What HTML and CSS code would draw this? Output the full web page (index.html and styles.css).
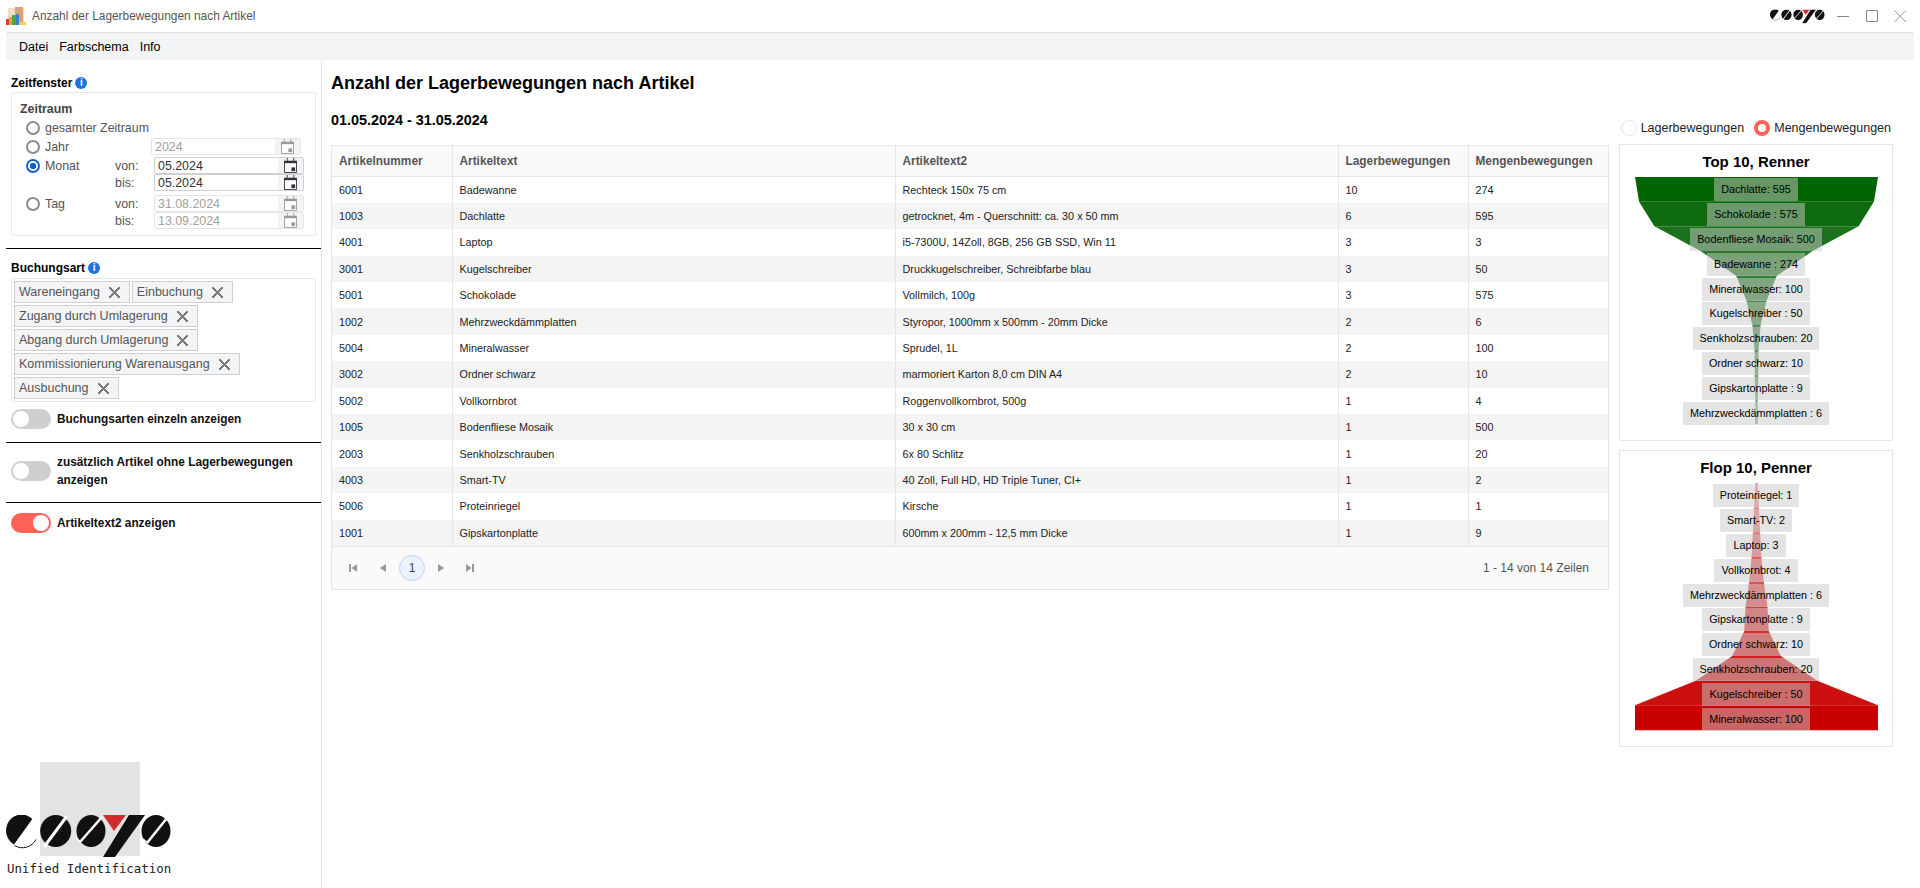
FILE: index.html
```html
<!DOCTYPE html>
<html lang="de">

<head>
    <meta charset="UTF-8">
    <title>Anzahl der Lagerbewegungen nach Artikel</title>
    <link rel="stylesheet" href="styles.css">
</head>

<body>
    <!-- Titelleiste -->
    <header class="titlebar">
        <svg class="app-icon" viewBox="0 0 20 20">
            <rect x="2" y="2" width="16" height="16" fill="#f1dccb"/>
            <rect x="9" y="1" width="8" height="16" fill="#d9a07a"/>
            <rect x="0" y="13" width="3" height="6" fill="#d8402f"/>
            <rect x="3" y="11" width="3" height="8" fill="#eba62a"/>
            <rect x="6" y="9" width="4" height="10" fill="#46a84f"/>
            <rect x="10" y="8" width="3" height="11" fill="#2f86d8"/>
            <rect x="13" y="16" width="7" height="3" fill="#f3d04e"/>
        </svg>
        <span class="titlebar-text">Anzahl der Lagerbewegungen nach Artikel</span>
        <svg class="titlebar-logo" viewBox="0 0 166 43">
            <use href="#cosys-logo"/>
        </svg>
        <div class="window-buttons">
            <svg viewBox="0 0 13 13"><path d="M0 6.500h12" stroke="#888" fill="none"/></svg>
            <svg viewBox="0 0 13 13"><path d="M.5.500h11v11H.5z" stroke="#888" fill="none"/></svg>
            <svg viewBox="0 0 13 13"><path d="M.5.500l11.500 11.500M12 .5L.5 12" stroke="#999" fill="none"/></svg>
        </div>
    </header>

    <nav class="menubar">
        <span>Datei</span>
        <span>Farbschema</span>
        <span>Info</span>
    </nav>

    <div class="content">
        <!-- linke Spalte -->
        <aside class="sidebar">
            <section class="side-block block-time">
                <h3 class="side-title">Zeitfenster <span class="info">i</span></h3>
                <div class="box timebox">
                    <div class="box-title">Zeitraum</div>
                    <div class="time-row">
                        <span class="radio"></span><span class="time-label">gesamter Zeitraum</span>
                    </div>
                    <div class="time-row">
                        <span class="radio"></span><span class="time-label">Jahr</span>
                        <span class="date-input disabled wide"><span>2024</span><span class="cal-btn"><svg class="cal" viewBox="0 0 14 16"><use href="#cal-icon"/></svg></span></span>
                    </div>
                    <div class="time-row row-tight row-month">
                        <span class="radio on"></span><span class="time-label">Monat</span>
                        <span class="von">von:</span>
                        <span class="date-input"><span>05.2024</span><span class="cal-btn"><svg class="cal active" viewBox="0 0 14 16"><use href="#cal-icon"/></svg></span></span>
                    </div>
                    <div class="time-row row-tight">
                        <span class="radio blank"></span><span class="time-label"></span>
                        <span class="von">bis:</span>
                        <span class="date-input"><span>05.2024</span><span class="cal-btn"><svg class="cal active" viewBox="0 0 14 16"><use href="#cal-icon"/></svg></span></span>
                    </div>
                    <div class="time-row row-tight row-day">
                        <span class="radio"></span><span class="time-label">Tag</span>
                        <span class="von">von:</span>
                        <span class="date-input disabled"><span>31.08.2024</span><span class="cal-btn"><svg class="cal" viewBox="0 0 14 16"><use href="#cal-icon"/></svg></span></span>
                    </div>
                    <div class="time-row row-tight">
                        <span class="radio blank"></span><span class="time-label"></span>
                        <span class="von">bis:</span>
                        <span class="date-input disabled"><span>13.09.2024</span><span class="cal-btn"><svg class="cal" viewBox="0 0 14 16"><use href="#cal-icon"/></svg></span></span>
                    </div>
                </div>
            </section>

            <section class="side-block block-booking">
                <h3 class="side-title">Buchungsart <span class="info">i</span></h3>
                <div class="box chips">
                    <span class="chip">Wareneingang <i class="chip-x"></i></span>
                    <span class="chip">Einbuchung <i class="chip-x"></i></span>
                    <span class="chip">Zugang durch Umlagerung <i class="chip-x"></i></span>
                    <span class="chip">Abgang durch Umlagerung <i class="chip-x"></i></span>
                    <span class="chip">Kommissionierung Warenausgang <i class="chip-x"></i></span>
                    <span class="chip">Ausbuchung <i class="chip-x"></i></span>
                </div>
                <div class="switch-row">
                    <span class="switch"></span>
                    <span class="switch-label">Buchungsarten einzeln anzeigen</span>
                </div>
            </section>

            <section class="side-block block-extra">
                <div class="switch-row">
                    <span class="switch"></span>
                    <span class="switch-label">zusätzlich Artikel ohne Lagerbewegungen anzeigen</span>
                </div>
            </section>

            <section class="block-text2">
                <div class="switch-row">
                    <span class="switch on"></span>
                    <span class="switch-label">Artikeltext2 anzeigen</span>
                </div>
            </section>

            <div class="side-logo">
                <div class="logo-square"></div>
                <svg class="logo-big" viewBox="0 0 166 43">
                    <use href="#cosys-logo"/>
                </svg>
                <div class="logo-text">Unified Identification</div>
            </div>
        </aside>

        <!-- Hauptbereich -->
        <main class="main">
            <h1 class="page-title">Anzahl der Lagerbewegungen nach Artikel</h1>
            <div class="date-line">
                <h2 class="date-range">01.05.2024 - 31.05.2024</h2>
                <div class="mode-radios">
                    <span class="mode-radio"></span><span>Lagerbewegungen</span>
                    <span class="mode-radio on"></span><span>Mengenbewegungen</span>
                </div>
            </div>

            <div class="work">
                <div class="grid">
                    <table class="grid-table">
                        <colgroup>
                            <col class="c1"><col class="c2"><col class="c3"><col class="c4"><col class="c5">
                        </colgroup>
                        <thead>
                            <tr><th>Artikelnummer</th><th>Artikeltext</th><th>Artikeltext2</th><th>Lagerbewegungen</th><th>Mengenbewegungen</th></tr>
                        </thead>
                        <tbody>
                            <tr><td>6001</td><td>Badewanne</td><td>Rechteck 150x 75 cm</td><td>10</td><td>274</td></tr>
                            <tr><td>1003</td><td>Dachlatte</td><td>getrocknet, 4m - Querschnitt: ca. 30 x 50 mm</td><td>6</td><td>595</td></tr>
                            <tr><td>4001</td><td>Laptop</td><td>i5-7300U, 14Zoll, 8GB, 256 GB SSD, Win 11</td><td>3</td><td>3</td></tr>
                            <tr><td>3001</td><td>Kugelschreiber</td><td>Druckkugelschreiber, Schreibfarbe blau</td><td>3</td><td>50</td></tr>
                            <tr><td>5001</td><td>Schokolade</td><td>Vollmilch, 100g</td><td>3</td><td>575</td></tr>
                            <tr><td>1002</td><td>Mehrzweckdämmplatten</td><td>Styropor, 1000mm x 500mm - 20mm Dicke</td><td>2</td><td>6</td></tr>
                            <tr><td>5004</td><td>Mineralwasser</td><td>Sprudel, 1L</td><td>2</td><td>100</td></tr>
                            <tr><td>3002</td><td>Ordner schwarz</td><td>marmoriert Karton 8,0 cm DIN A4</td><td>2</td><td>10</td></tr>
                            <tr><td>5002</td><td>Vollkornbrot</td><td>Roggenvollkornbrot, 500g</td><td>1</td><td>4</td></tr>
                            <tr><td>1005</td><td>Bodenfliese Mosaik</td><td>30 x 30 cm</td><td>1</td><td>500</td></tr>
                            <tr><td>2003</td><td>Senkholzschrauben</td><td>6x 80 Schlitz</td><td>1</td><td>20</td></tr>
                            <tr><td>4003</td><td>Smart-TV</td><td>40 Zoll, Full HD, HD Triple Tuner, CI+</td><td>1</td><td>2</td></tr>
                            <tr><td>5006</td><td>Proteinriegel</td><td>Kirsche</td><td>1</td><td>1</td></tr>
                            <tr><td>1001</td><td>Gipskartonplatte</td><td>600mm x 200mm - 12,5 mm Dicke</td><td>1</td><td>9</td></tr>
                        </tbody>
                    </table>
                    <div class="pager">
                        <svg class="pg-icon first" viewBox="0 0 10 10"><path d="M1 1h2v8H1zM9 1v8L3.500 5z"/></svg>
                        <svg class="pg-icon prev" viewBox="0 0 10 10"><path d="M8 1v8L2 5z"/></svg>
                        <span class="pg-num">1</span>
                        <svg class="pg-icon next" viewBox="0 0 10 10"><path d="M2 1v8l6-4z"/></svg>
                        <svg class="pg-icon last" viewBox="0 0 10 10"><path d="M9 1H7v8h2zM1 1v8l5.500-4z"/></svg>
                        <span class="pg-info">1 - 14 von 14 Zeilen</span>
                    </div>
                </div>

                <div class="charts">
                    <div class="chart-card">
                        <div class="chart-title">Top 10, Renner</div>
                        <div class="funnel">
                            <svg class="funnel-bg" viewBox="0 0 243 248">
                                <polygon fill="#006400" points="0,0 243,0 238.900,24.700 4.100,24.700"/>
                                <polygon fill="#0e6b0e" points="4.100,24.700 238.900,24.700 223.600,49.300 19.400,49.300"/>
                                <polygon fill="#1c721c" points="19.400,49.300 223.600,49.300 177.500,74 65.500,74"/>
                                <polygon fill="#2a792a" points="65.500,74 177.500,74 141.900,98.700 101.100,98.700"/>
                                <polygon fill="#388038" points="101.100,98.700 141.900,98.700 131.700,123.300 111.300,123.300"/>
                                <polygon fill="#468746" points="111.300,123.300 131.700,123.300 125.600,148 117.400,148"/>
                                <polygon fill="#548e54" points="117.400,148 125.600,148 123.500,173 119.500,173"/>
                                <polygon fill="#629562" points="119.500,173 123.500,173 123.300,197.700 119.700,197.700"/>
                                <polygon fill="#709c70" points="119.700,197.700 123.300,197.700 122.700,222.300 120.300,222.300"/>
                                <polygon fill="#7ea37e" points="120.300,222.300 122.700,222.300 122.700,247.300 120.300,247.300"/>
                            </svg>
                            <span class="f-label">Dachlatte: 595</span>
                            <span class="f-label">Schokolade : 575</span>
                            <span class="f-label">Bodenfliese Mosaik: 500</span>
                            <span class="f-label">Badewanne : 274</span>
                            <span class="f-label">Mineralwasser: 100</span>
                            <span class="f-label">Kugelschreiber : 50</span>
                            <span class="f-label">Senkholzschrauben: 20</span>
                            <span class="f-label">Ordner schwarz: 10</span>
                            <span class="f-label">Gipskartonplatte : 9</span>
                            <span class="f-label">Mehrzweckdämmplatten : 6</span>
                        </div>
                    </div>
                    <div class="chart-card">
                        <div class="chart-title">Flop 10, Penner</div>
                        <div class="funnel">
                            <svg class="funnel-bg" viewBox="0 0 243 248">
                                <polygon fill="#ec9090" points="120.300,0 122.700,0 123.900,24.700 119.100,24.700"/>
                                <polygon fill="#e88080" points="119.100,24.700 123.900,24.700 125.100,49.300 117.900,49.300"/>
                                <polygon fill="#e47070" points="117.900,49.300 125.100,49.300 126.400,74 116.600,74"/>
                                <polygon fill="#e06060" points="116.600,74 126.400,74 128.800,98.700 114.200,98.700"/>
                                <polygon fill="#dc5050" points="114.200,98.700 128.800,98.700 132.400,123.300 110.600,123.300"/>
                                <polygon fill="#d84040" points="110.600,123.300 132.400,123.300 133.700,148 109.300,148"/>
                                <polygon fill="#d43030" points="109.300,148 133.700,148 145.800,173 97.200,173"/>
                                <polygon fill="#d02020" points="97.200,173 145.800,173 182.300,197.700 60.700,197.700"/>
                                <polygon fill="#cc1010" points="60.700,197.700 182.300,197.700 243,222.300 0,222.300"/>
                                <polygon fill="#c80000" points="0,222.300 243,222.300 243,247.300 0,247.300"/>
                            </svg>
                            <span class="f-label">Proteinriegel: 1</span>
                            <span class="f-label">Smart-TV: 2</span>
                            <span class="f-label">Laptop: 3</span>
                            <span class="f-label">Vollkornbrot: 4</span>
                            <span class="f-label">Mehrzweckdämmplatten : 6</span>
                            <span class="f-label">Gipskartonplatte : 9</span>
                            <span class="f-label">Ordner schwarz: 10</span>
                            <span class="f-label">Senkholzschrauben: 20</span>
                            <span class="f-label">Kugelschreiber : 50</span>
                            <span class="f-label">Mineralwasser: 100</span>
                        </div>
                    </div>
                </div>
            </div>
        </main>
    </div>

    <!-- wiederverwendete Symbole -->
    <svg class="defs" width="0" height="0">
        <defs>
            <symbol id="cal-icon" viewBox="0 0 14 16">
                <path d="M.5 3.500h13v12H.5z" fill="#fff" stroke="currentColor"/>
                <path d="M0 3h14v2.500H0z" fill="currentColor"/>
                <path d="M3.500 0v3M10.500 0v3" stroke="currentColor"/>
                <path d="M8 10h4v4H8z" fill="currentColor"/>
            </symbol>
            <symbol id="cosys-logo" viewBox="6 0 166 43">
                <!-- c -->
                <path d="M32.300 4A15.500 16 0 1 0 14 29.500z" fill="#111"/>
                <path d="M14.500 30.500A15.500 16 0 0 0 36 24.500" fill="none" stroke="#111"/>
                <!-- o -->
                <ellipse cx="55.700" cy="16" rx="15.500" ry="16" fill="#111"/>
                <path d="M67 1L44 32" stroke="#fff" stroke-width="3"/>
                <!-- s -->
                <ellipse cx="91" cy="16" rx="14.500" ry="16" fill="#111"/>
                <path d="M102 2L80 27" stroke="#fff" stroke-width="2.500"/>
                <path d="M81 27l-5-4" stroke="#fff" stroke-width="1.500"/>
                <!-- y -->
                <path d="M129 0h16L115 42h-12z" fill="#111"/>
                <path d="M103 0h23l-12 16z" fill="#d22b2b"/>
                <!-- s -->
                <ellipse cx="156" cy="16" rx="14.500" ry="16" fill="#111"/>
                <path d="M167 3L147 28" stroke="#fff" stroke-width="2.500"/>
                <path d="M148 28l-5-4" stroke="#fff" stroke-width="1.500"/>
            </symbol>
        </defs>
    </svg>
</body>

</html>
```

FILE: styles.css
```css
/* Seite */
html,
body {
    margin: 0;
    padding: 0;
    height: 100%;
    overflow: hidden;
}

body {
    display: flex;
    flex-direction: column;
    width: 1920px;
    height: 888px;
    box-sizing: border-box;
    padding: 0 6px;
    background: #fff;
    font-family: "Liberation Sans", Arial, sans-serif;
    font-size: 12.400px;
    color: #212121;
}

.defs {
    position: absolute;
}

/* Titelleiste */
.titlebar {
    display: flex;
    align-items: center;
    height: 32px;
    flex: none;
    border-bottom: 1px solid #e3e3e3;
}

.app-icon {
    width: 20px;
    height: 20px;
    margin-right: 6px;
}

.titlebar-text {
    color: #555;
    font-size: 11.900px;
}

.titlebar-logo {
    width: 55px;
    height: 15px;
    margin-left: auto;
    margin-right: 12px;
}

.window-buttons {
    display: flex;
    gap: 15.500px;
    margin-right: 7px;
}

.window-buttons svg {
    width: 13px;
    height: 13px;
}

/* Menue */
.menubar {
    display: flex;
    gap: 11px;
    align-items: center;
    flex: none;
    height: 27px;
    padding-left: 13px;
    background: #f3f4f6;
    color: #000;
    font-size: 12.500px;
}

/* Inhalt */
.content {
    display: flex;
    flex: 1;
    min-height: 0;
}

.sidebar {
    position: relative;
    width: 315px;
    flex: none;
    border-right: 1px solid #e6e6e6;
}

.side-block {
    border-bottom: 1px solid #000;
}

.block-time {
    height: 189px;
    box-sizing: border-box;
    padding: 15px 5px 0;
}

.block-booking {
    height: 194px;
    box-sizing: border-box;
    padding: 11px 5px 0;
}

.block-extra {
    height: 60px;
    box-sizing: border-box;
    padding: 3px 5px 0;
}

.block-text2 {
    padding: 3px 5px 0;
}

.side-title {
    display: flex;
    align-items: center;
    gap: 3px;
    margin: 0 0 1px;
    font-size: 12px;
    font-weight: bold;
    color: #000;
    line-height: 16px;
}

.block-booking .side-title {
    margin-bottom: 2px;
}

.info {
    display: inline-block;
    width: 12px;
    height: 12px;
    border-radius: 50%;
    background: #1a73e0;
    color: #fff;
    font-size: 10px;
    line-height: 12px;
    text-align: center;
}

.box {
    border: 1px solid #e8e8e8;
    border-radius: 2px;
}

.timebox {
    height: 144px;
    box-sizing: border-box;
    padding: 9px 11px 0 8px;
}

.box-title {
    font-weight: bold;
    color: #444;
    line-height: 14px;
    margin-bottom: 2px;
}

.time-row {
    display: flex;
    align-items: center;
    height: 19px;
    padding-left: 6px;
    color: #555;
}

.row-tight {
    height: 17px;
}

.row-month {
    margin-top: 1px;
}

.row-day {
    margin-top: 4px;
}

.radio {
    width: 14px;
    height: 14px;
    flex: none;
    box-sizing: border-box;
    margin-right: 5px;
    border: 2px solid #8b8a94;
    border-radius: 50%;
    background: #fff;
}

.radio.on {
    border-color: #0f62d6;
    background: radial-gradient(circle, #0f62d6 0 3px, #fff 3.500px);
}

.radio.blank {
    visibility: hidden;
}

.time-label {
    width: 70px;
    flex: none;
    white-space: nowrap;
}

.von {
    width: 38px;
    flex: none;
}

.date-input {
    display: flex;
    align-items: center;
    justify-content: space-between;
    width: 150px;
    height: 17px;
    box-sizing: border-box;
    margin-left: auto;
    padding-left: 3px;
    border: 1px solid #cfcfcf;
    border-radius: 2px;
    background: #fff;
    color: #333;
}

.date-input.disabled {
    border-color: #e6e6e6;
    color: #a0a0a0;
}

.date-input.wide {
    margin-right: 3px;
}

.cal-btn {
    display: flex;
    align-items: center;
    justify-content: center;
    width: 25px;
    height: 100%;
    background: #f3f3f3;
}

.cal {
    width: 13px;
    height: 15px;
    color: #999;
}

.cal.active {
    color: #2e3440;
}

/* Chips */
.chips {
    display: flex;
    flex-wrap: wrap;
    align-content: flex-start;
    gap: 2px;
    height: 124px;
    box-sizing: border-box;
    padding: 2px;
    font-size: 12.500px;
}

.chip {
    display: inline-flex;
    align-items: center;
    height: 22px;
    box-sizing: border-box;
    padding: 0 9px 0 4px;
    border: 1px solid #cfcfcf;
    background: #f3f4f6;
    color: #555;
}

.chip-x {
    display: block;
    width: 11px;
    height: 11px;
    margin-left: 9px;
    background:
        linear-gradient(45deg, transparent 42%, #7c7c7c 42% 58%, transparent 58%),
        linear-gradient(-45deg, transparent 42%, #7c7c7c 42% 58%, transparent 58%);
}

.switch-row {
    display: flex;
    align-items: center;
    gap: 6px;
    margin-top: 7px;
}

.switch {
    position: relative;
    width: 40px;
    height: 20px;
    flex: none;
    border-radius: 10px;
    background: #cfcfcf;
}

.switch::after {
    content: "";
    position: absolute;
    left: 2px;
    top: 2px;
    width: 16px;
    height: 16px;
    border-radius: 50%;
    background: #fff;
}

.switch.on {
    background: #ff6358;
}

.switch.on::after {
    left: 22px;
}

.switch-label {
    font-size: 11.850px;
    font-weight: bold;
    color: #111;
    line-height: 18px;
}

/* Logo unten links */
.side-logo {
    position: absolute;
    left: 0;
    top: 702px;
    width: 200px;
    height: 120px;
}

.logo-square {
    position: absolute;
    left: 34px;
    top: 0;
    width: 100px;
    height: 94px;
    background: #e3e3e3;
}

.logo-big {
    position: absolute;
    left: 0;
    top: 53px;
    width: 166px;
    height: 43px;
}

.logo-text {
    position: absolute;
    left: 1px;
    top: 99px;
    font-family: "DejaVu Sans Mono", monospace;
    font-size: 12.400px;
    color: #222;
}

/* Hauptbereich */
.main {
    flex: 1;
    min-width: 0;
    padding: 0 21px 0 9px;
}

.page-title {
    margin: 12px 0 0;
    font-size: 18px;
    line-height: 22px;
    color: #000;
}

.date-line {
    display: flex;
    align-items: flex-start;
    justify-content: space-between;
    height: 51px;
    padding-top: 17px;
    box-sizing: border-box;
}

.date-range {
    margin: 0;
    font-size: 14.400px;
    line-height: 18px;
    color: #000;
}

.mode-radios {
    display: flex;
    align-items: center;
    gap: 4px;
    margin-top: 9px;
    margin-right: 2px;
    font-size: 12.500px;
    color: #222;
}

.mode-radio {
    width: 16px;
    height: 16px;
    box-sizing: border-box;
    border: 1px solid #e6e6e6;
    border-radius: 50%;
    background: #fff;
}

.mode-radio.on {
    border: 4px solid #ff6358;
    margin-left: 6px;
}

.work {
    display: flex;
    gap: 10px;
    align-items: flex-start;
}

/* Tabelle */
.grid {
    flex: 1;
    border: 1px solid #e6e6e6;
}

.grid-table {
    width: 100%;
    border-collapse: collapse;
    table-layout: fixed;
}

.c1 { width: 120px; }
.c2 { width: 443px; }
.c3 { width: 443px; }
.c4 { width: 130px; }

.grid-table th {
    height: 30px;
    padding: 0 7px;
    background: #fafafa;
    border-bottom: 1px solid #e6e6e6;
    border-left: 1px solid #e6e6e6;
    text-align: left;
    color: #555;
    font-size: 11.850px;
}

.grid-table td {
    height: 26.400px;
    box-sizing: border-box;
    padding: 0 7px;
    border-left: 1px solid #e6e6e6;
    font-size: 10.800px;
    color: #222;
}

.grid-table th:first-child,
.grid-table td:first-child {
    border-left: 0;
}

.grid-table tbody tr:nth-child(even) {
    background: #f4f4f4;
}

/* Seitennavigation */
.pager {
    display: flex;
    align-items: center;
    height: 42px;
    padding: 0 8px 0 16px;
    border-top: 1px solid #e6e6e6;
    background: #fafafa;
    color: #555;
    font-size: 12px;
}

.pg-icon {
    width: 10px;
    height: 10px;
    fill: #999;
}

.pg-icon.prev {
    margin-left: 20px;
    margin-right: 11px;
}

.pg-icon.next {
    margin-left: 11px;
    margin-right: 19px;
}

.pg-num {
    width: 26px;
    height: 26px;
    box-sizing: border-box;
    border: 1px solid #bcd7f7;
    border-radius: 50%;
    background: #eaf2fc;
    text-align: center;
    line-height: 24px;
    color: #444;
}

.pg-info {
    margin-left: auto;
    margin-right: 11px;
}

/* Diagramme */
.charts {
    display: flex;
    flex-direction: column;
    gap: 9px;
    width: 274px;
    flex: none;
    margin-top: -1px;
}

.chart-card {
    height: 297px;
    box-sizing: border-box;
    border: 1px solid #e6e6e6;
    padding: 7px 15px 0;
}

.chart-title {
    height: 25px;
    text-align: center;
    font-size: 15px;
    font-weight: bold;
    color: #000;
    line-height: 20px;
}

.funnel {
    position: relative;
    display: flex;
    flex-direction: column;
    align-items: center;
    gap: 1.900px;
    height: 248px;
    padding-top: 1px;
    box-sizing: border-box;
}

.funnel-bg {
    position: absolute;
    left: 0;
    top: 0;
    width: 243px;
    height: 248px;
}

.f-label {
    position: relative;
    height: 23px;
    padding: 0 7px;
    background: rgba(202, 202, 202, 0.5);
    color: #000;
    font-size: 10.800px;
    line-height: 23px;
    white-space: nowrap;
}
```
